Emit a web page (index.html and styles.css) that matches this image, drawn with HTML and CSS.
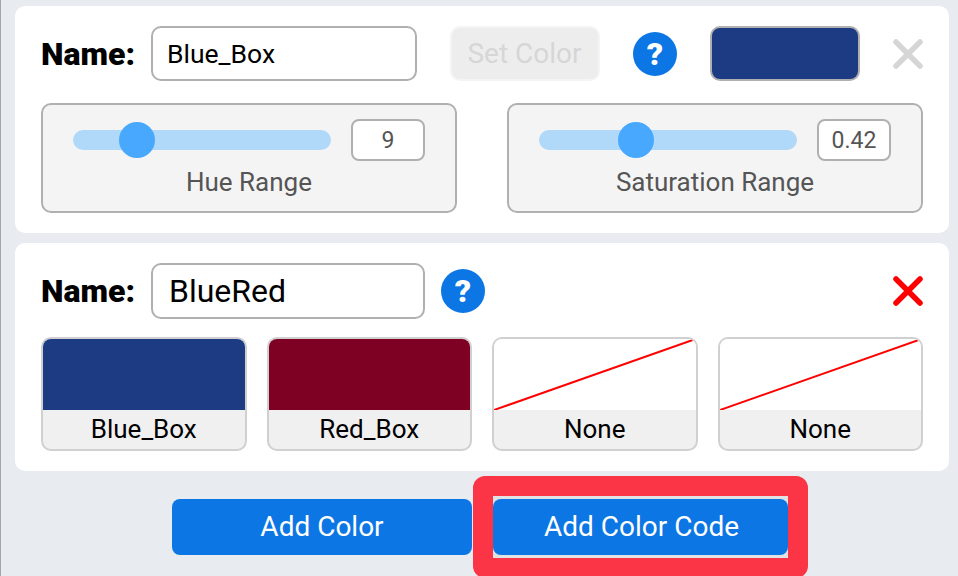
FILE: index.html
```html
<!DOCTYPE html>
<html lang="en">
<head>
  <meta charset="UTF-8" />
  <title>Color Settings</title>
  <link rel="stylesheet" href="styles.css">
</head>
<body>

<div class="card card-color">
  <div class="name-row">
    <label class="name-label">Name:</label>
    <input class="name-input" type="text" value="Blue_Box" />
    <button class="set-color" disabled>Set Color</button>
    <div class="help">?</div>
    <div class="swatch"></div>
    <svg class="close" viewBox="0 0 30 30"><path d="M3 3L27 27M27 3L3 27" /></svg>
  </div>
  <div class="range-row">
    <div class="range-box">
      <div class="range-line">
        <div class="track"><div class="thumb" style="left: 46px"></div></div>
        <div class="range-value">9</div>
      </div>
      <div class="range-label">Hue Range</div>
    </div>
    <div class="range-box">
      <div class="range-line">
        <div class="track"><div class="thumb" style="left: 79px"></div></div>
        <div class="range-value">0.42</div>
      </div>
      <div class="range-label">Saturation Range</div>
    </div>
  </div>
</div>

<div class="card card-code">
  <div class="name-row">
    <label class="name-label">Name:</label>
    <input class="name-input code-input" type="text" value="BlueRed" />
    <div class="help">?</div>
    <svg class="close active" viewBox="0 0 30 30"><path d="M3 3L27 27M27 3L3 27" /></svg>
  </div>
  <div class="tiles">
    <div class="tile">
      <div class="tile-color blue"></div>
      <div class="tile-label">Blue_Box</div>
    </div>
    <div class="tile">
      <div class="tile-color red"></div>
      <div class="tile-label">Red_Box</div>
    </div>
    <div class="tile">
      <svg class="tile-color" viewBox="0 0 202 71" preserveAspectRatio="none"><line x1="0" y1="71" x2="202" y2="0" /></svg>
      <div class="tile-label">None</div>
    </div>
    <div class="tile">
      <svg class="tile-color" viewBox="0 0 202 71" preserveAspectRatio="none"><line x1="0" y1="71" x2="202" y2="0" /></svg>
      <div class="tile-label">None</div>
    </div>
  </div>
</div>

<div class="actions">
  <button class="add-btn add-color">Add Color</button>
  <div class="highlight">
    <button class="add-btn add-code">Add Color Code</button>
  </div>
</div>

</body>
</html>
```

FILE: styles.css
```css
:root {
  --page-bg: #e8ebef;
  --line: #b0b0b0;
  --blue: #0b76e4;
  --navy: #1c3b82;
  --wine: #7e0023;
}
html, body {
  height: 576px;
  overflow: hidden;
}
body {
  margin: 0;
  padding: 6px 0 0 14px;
  box-sizing: border-box;
  background: var(--page-bg);
  border-left: 1px solid #a3a7ab;
  font-family: Roboto, sans-serif;
}
.card {
  width: 934px;
  box-sizing: border-box;
  background: #fff;
  border-radius: 10px;
  padding: 20px 26px 0;
}
.card-color {
  height: 227px;
}
.card-code {
  height: 228px;
  margin-top: 10px;
}
.name-row {
  display: flex;
  align-items: center;
  height: 55px;
}
.card-code .name-row {
  height: 56px;
}
.name-label {
  width: 110px;
  box-sizing: border-box;
  font-size: 32px;
  font-weight: 900;
  color: #000;
}
.name-input {
  width: 266px;
  height: 55px;
  box-sizing: border-box;
  padding: 0 14px;
  border: 2px solid var(--line);
  border-radius: 10px;
  outline: none;
  background: #fff;
  color: #000;
  font-family: Roboto, sans-serif;
  font-size: 26.5px;
}
.code-input {
  width: 274px;
  height: 56px;
  padding: 0 16px;
  font-size: 32px;
}
.set-color {
  width: 150px;
  height: 55px;
  margin-left: 33px;
  padding: 0 1px 0 0;
  border: 2px solid #f5f4f5;
  border-radius: 10px;
  background: #eeedee;
  color: #d6d6d6;
  font-family: Roboto, sans-serif;
  font-size: 28px;
}
.help {
  width: 44px;
  height: 44px;
  margin-left: 33px;
  border-radius: 50%;
  background: var(--blue);
  color: #fff;
  font-size: 32px;
  font-weight: 900;
  line-height: 44px;
  text-align: center;
}
.code-input + .help {
  margin-left: 16px;
}
.swatch {
  width: 150px;
  height: 55px;
  box-sizing: border-box;
  margin-left: 33px;
  border: 2px solid var(--line);
  border-radius: 10px;
  background: var(--navy);
}
.close {
  width: 30px;
  height: 30px;
  margin-left: auto;
}
.close path {
  fill: none;
  stroke: #d6d6d6;
  stroke-width: 5.5;
  stroke-linecap: round;
}
.close.active path {
  stroke: #fe0000;
}
.range-row {
  display: flex;
  justify-content: space-between;
  margin-top: 22px;
}
.range-box {
  width: 416px;
  height: 110px;
  box-sizing: border-box;
  padding: 14px 30px 0;
  border: 2px solid var(--line);
  border-radius: 10px;
  background: #f4f4f5;
}
.range-line {
  display: flex;
  align-items: center;
  justify-content: space-between;
}
.track {
  position: relative;
  width: 258px;
  height: 20px;
  border-radius: 10px;
  background: #b0d8f9;
}
.thumb {
  position: absolute;
  top: -8px;
  width: 36px;
  height: 36px;
  border-radius: 50%;
  background: #47a8fe;
}
.range-value {
  width: 74px;
  height: 42px;
  box-sizing: border-box;
  border: 2px solid var(--line);
  border-radius: 8px;
  background: #fff;
  color: #555;
  font-size: 23px;
  line-height: 40px;
  text-align: center;
}
.range-label {
  margin-top: 5px;
  color: #555;
  font-size: 26px;
  line-height: 32px;
  text-align: center;
}
.tiles {
  display: grid;
  grid-template-columns: repeat(4, 1fr);
  gap: 20px;
  margin-top: 18px;
}
.tile {
  height: 114px;
  box-sizing: border-box;
  border: 2px solid #d0d0d0;
  border-radius: 10px;
  overflow: hidden;
  background: #f0f0f1;
}
.tile-color {
  display: block;
  width: 100%;
  height: 71px;
  background: #fff;
}
.tile-color.blue {
  background: var(--navy);
}
.tile-color.red {
  background: var(--wine);
}
.tile-color line {
  stroke: #fe0000;
  stroke-width: 2;
  vector-effect: non-scaling-stroke;
}
.tile-label {
  color: #000;
  font-size: 26px;
  line-height: 39px;
  text-align: center;
}
.actions {
  display: flex;
  align-items: flex-start;
  padding-left: 157px;
  margin-top: 5px;
}
.add-btn {
  height: 56px;
  padding: 0 0 2px;
  border: none;
  border-radius: 8px;
  background: var(--blue);
  color: #fff;
  font-family: Roboto, sans-serif;
  font-size: 28px;
}
.add-color {
  width: 300px;
  margin-top: 23px;
}
.add-code {
  display: block;
  width: 295px;
  padding-left: 2px;
}
.highlight {
  margin-left: 1px;
  padding: 3px 0;
  border: 20px solid #fb3545;
  border-radius: 12px;
  background: #e2e2e4;
}
```
